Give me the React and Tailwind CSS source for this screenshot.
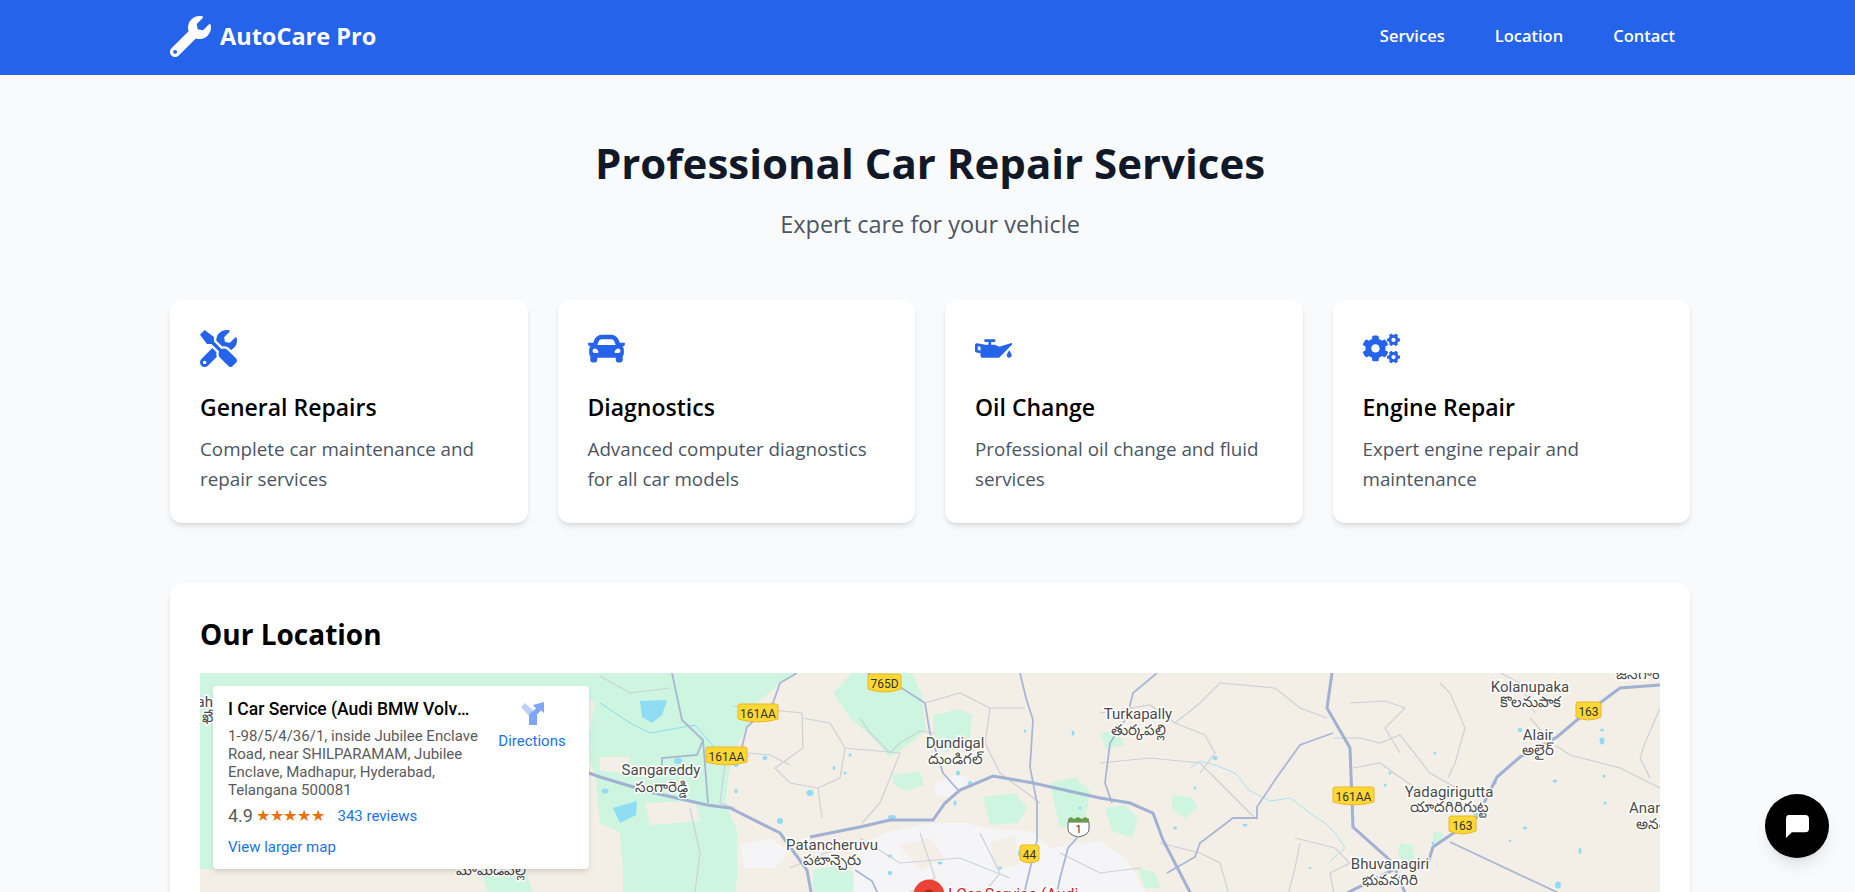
import React from 'react';
import { FaWrench, FaTools, FaCar, FaOilCan, FaCogs } from 'react-icons/fa';

const services = [
  { icon: FaTools, title: 'General Repairs', text: 'Complete car maintenance and repair services' },
  { icon: FaCar, title: 'Diagnostics', text: 'Advanced computer diagnostics for all car models' },
  { icon: FaOilCan, title: 'Oil Change', text: 'Professional oil change and fluid services' },
  { icon: FaCogs, title: 'Engine Repair', text: 'Expert engine repair and maintenance' },
];

// map data, coordinates are px inside the embed
const greens = [
  'M0 0H597L580 10 557 30 547 54 537 72 530 95 525 130 537 157 537 205 535 225H423L423 195 420 160 400 150 395 100 390 90 389 60 395 30 380 20H0Z',
  'M0 0H14V196H0Z',
  'M280 197H325L335 225H290Z',
  'M613 197 640 192 653 200 655 225H613Z',
  'M633 20 652 0H712L722 22 726 58 700 78 690 84 668 60 650 45Z',
  'M733 42 760 36 772 42 770 66 745 80 735 70Z',
  'M692 102 720 98 724 112 706 118 694 112Z',
  'M900 60 916 58 925 72 906 76Z',
  'M783 124 815 120 827 135 818 150 790 152Z',
  'M850 110 875 104 890 118 885 150 860 155Z',
  'M905 135 925 132 938 146 932 165 912 158Z',
  'M972 122 990 124 998 134 985 146 972 135Z',
  'M1265 152 1278 152 1278 158 1265 158Z',
  'M1200 170 1212 172 1215 188 1205 192 1198 180Z',
  'M1233 158 1243 160 1240 170 1233 168Z',
  'M938 195 955 200 960 215 945 215Z',
];

const urban = [
  'M653 225 655 175 690 158 733 150 765 150 785 155 830 158 850 175 900 168 925 185 950 225Z',
  'M540 172 570 165 590 178 575 195 545 195Z',
  'M735 110 760 100 770 108 750 125 735 122Z',
];

const beigeInUrban = 'M700 172 730 165 745 185 720 198Z M790 170 815 162 820 192 795 198Z';

const majorRoads = [
  'M389 100 400 104 450 119 507 132 530 135 580 160 607 197 613 230',
  'M610 164 660 154 690 147 733 147 745 130 760 117 793 103 833 110 900 125 930 130 953 140 963 167 993 225',
  'M1132 0 1127 35 1150 75 1153 154 1193 190 1207 225',
  'M1460 12 1420 15 1377 47 1357 64 1320 84 1297 104 1277 144 1233 174 1228 190 1193 197 1137 225',
];

const midRoads = [
  'M472 0 482 47 503 67 508 130',
  'M597 0 580 10 573 30 547 54 542 74',
  'M503 67 497 82 462 85 462 92',
  'M820 0 826 25 833 47 830 94 837 130 837 167 823 225',
  'M667 0 700 14 725 30 730 60 743 100 758 117',
  'M957 0 933 20 927 44 910 70 905 110 912 130',
  'M1133 60 1100 72 1077 104 1057 134 1057 145 1033 145 1000 170 995 184 967 200',
  'M1250 169 1363 222',
  'M877 165 868 175 860 205 856 225',
  'M655 197 672 208 680 225 700 225',
];

const minorRoads = [
  'M400 3 430 20 470 15',
  'M533 33 602 40 603 75 575 95 590 110 618 115 622 145',
  'M602 45 630 50 645 75 700 80 690 105 680 130 662 150',
  'M645 75 640 105 618 115',
  'M547 80 570 82 590 92',
  'M525 90 520 130 535 135',
  'M725 30 760 20 790 35 825 35',
  'M790 35 785 70 800 100 840 130',
  'M660 45 670 60 690 80 700 70 720 58 735 60',
  'M490 135 500 180 495 219',
  'M590 195 620 182 640 175',
  'M900 40 950 32 975 50 1000 30 1020 10',
  'M975 50 1005 62 1015 80 1000 100',
  'M900 90 950 85 1000 90 1040 130 1055 145',
  'M1020 10 1075 15 1100 35 1127 45',
  'M1150 30 1185 28 1205 35 1185 55 1200 80',
  'M1133 65 1160 65 1180 70 1200 62 1230 100 1265 120',
  'M1153 95 1180 90 1215 115 1225 125',
  'M1240 10 1250 20 1265 55 1255 90 1248 105',
  'M1100 170 1095 195 1087 225',
  'M1095 165 1135 175 1150 190 1130 200 1135 225',
  'M1340 62 1370 82 1420 95 1460 115',
  'M1330 45 1345 62',
  'M1460 35 1445 70 1440 85 1450 105',
  'M960 170 1000 180 1020 190 1030 225',
  'M1300 0 1320 10 1335 40',
  'M660 165 700 190 760 185 810 205',
  'M720 160 735 205 700 225',
  'M780 160 800 200 780 225',
  'M860 180 900 200 940 195',
];

const lakes = [
  'M440 28 467 27 462 42 452 50 442 44Z',
  'M413 135 437 128 436 142 420 150Z',
];

const waterBits = [
  [478, 88, 8, 6], [536, 92, 5, 4], [405, 118, 7, 5], [565, 85, 5, 4], [536, 118, 3, 5], [580, 148, 6, 6],
  [634, 95, 3, 4], [590, 168, 4, 5], [650, 82, 3, 3], [645, 100, 3, 3], [692, 144, 8, 4], [758, 100, 4, 5],
  [770, 110, 4, 4], [690, 183, 5, 3], [740, 190, 5, 3], [755, 130, 3, 5], [1015, 85, 5, 4], [975, 155, 4, 3],
  [995, 115, 3, 3], [1045, 152, 5, 3], [1110, 195, 3, 2], [1190, 100, 3, 3], [1235, 80, 3, 3], [1233, 170, 3, 3],
  [1295, 110, 4, 3], [1320, 57, 5, 4], [1402, 68, 5, 7], [1402, 57, 4, 3], [1404, 103, 3, 3], [1355, 108, 5, 3],
  [1405, 130, 3, 3], [1325, 155, 4, 3], [1358, 212, 6, 7], [1380, 178, 3, 6], [1185, 112, 3, 3], [1275, 140, 4, 5],
  [1310, 168, 3, 2], [873, 60, 3, 5], [825, 58, 3, 3], [880, 135, 3, 3], [822, 180, 8, 8], [800, 195, 4, 3],
  [690, 200, 5, 4], [610, 120, 7, 6],
];

const shields = [
  { x: 668, y: 1, w: 33, h: 19, t: '765D' },
  { x: 538, y: 31, w: 40, h: 19, t: '161AA' },
  { x: 506, y: 74, w: 41, h: 19, t: '161AA' },
  { x: 820, y: 172, w: 19, h: 19, t: '44' },
  { x: 1133, y: 114, w: 41, h: 19, t: '161AA' },
  { x: 1249, y: 143, w: 27, h: 19, t: '163' },
  { x: 1376, y: 29, w: 25, h: 19, t: '163' },
];

const labels = [
  { x: 461, y: 102, t: 'Sangareddy' }, { x: 461, y: 119, t: 'సంగారెడ్డి' },
  { x: 755, y: 75, t: 'Dundigal' }, { x: 755, y: 91, t: 'దుండిగల్' },
  { x: 632, y: 177, t: 'Patancheruvu' }, { x: 632, y: 192, t: 'పటాన్చెరు' },
  { x: 938, y: 46, t: 'Turkapally' }, { x: 938, y: 62, t: 'తుర్కపల్లి' },
  { x: 1330, y: 19, t: 'Kolanupaka' }, { x: 1330, y: 34, t: 'కొలనుపాక' },
  { x: 1338, y: 67, t: 'Alair' }, { x: 1338, y: 82, t: 'అలైర్' },
  { x: 1249, y: 124, t: 'Yadagirigutta' }, { x: 1249, y: 139, t: 'యాదగిరిగుట్ట' },
  { x: 1190, y: 196, t: 'Bhuvanagiri' }, { x: 1190, y: 212, t: 'భువనగిరి' },
  { x: 1429, y: 140, t: 'Anantaram', start: true }, { x: 1436, y: 156, t: 'అనంతారం', start: true },
  { x: 1438, y: 6, t: 'జనగాం' },
  { x: 291, y: 202, t: 'మామిడిపల్లి' },
  { x: 13, y: 34, t: 'ah', end: true }, { x: 13, y: 49, t: 'ఖే', end: true },
];

function MapDrawing() {
  return (
    <svg viewBox="0 0 1460 450" className="block w-full h-[450px]">
      <rect width="1460" height="450" fill="#f4efe6" />
      {greens.map((d, i) => <path key={i} d={d} fill="#cdf5e0" />)}
      <path d="M445 130 495 128 500 148 450 152Z M400 84 430 84 425 100 400 98Z" fill="#f4efe6" />
      {urban.map((d, i) => <path key={i} d={d} fill="#f5f5f7" />)}
      <path d={beigeInUrban} fill="#f4efe6" />
      {lakes.map((d, i) => <path key={i} d={d} fill="#8fdcf5" />)}
      {waterBits.map(([x, y, w, h], i) => <ellipse key={i} cx={x} cy={y} rx={w / 2} ry={h / 2} fill="#8fdcf5" />)}
      {minorRoads.map((d, i) => <path key={i} d={d} fill="none" stroke="#ccd0d8" strokeWidth="1.2" />)}
      <path d="M990 95 1000 88 1015 92 1035 100 1050 118 1070 128 1090 125 1110 140 1125 150 1135 160 1145 175 1130 188" fill="none" stroke="#a5e4f2" strokeWidth="1" />
      <path d="M400 30 430 50 450 60 495 52 515 75" fill="none" stroke="#8ddcf2" strokeWidth="1" />
      {midRoads.map((d, i) => <path key={i} d={d} fill="none" stroke="#a9b7d5" strokeWidth="1.8" />)}
      {majorRoads.map((d, i) => <path key={i} d={d} fill="none" stroke="#a0b1d4" strokeWidth="3" />)}
      {shields.map((s, i) => (
        <g key={i}>
          <path
            d={`M${s.x + 2} ${s.y}H${s.x + s.w - 2}Q${s.x + s.w} ${s.y} ${s.x + s.w} ${s.y + 2}V${s.y + s.h - 4}Q${s.x + s.w / 2} ${s.y + s.h + 2} ${s.x} ${s.y + s.h - 4}V${s.y + 2}Q${s.x} ${s.y} ${s.x + 2} ${s.y}Z`}
            fill="#fdd835"
            stroke="#f0b429"
          />
          <text x={s.x + s.w / 2} y={s.y + 14} textAnchor="middle" fontSize="12" fill="#333" fontFamily="Roboto, sans-serif">{s.t}</text>
        </g>
      ))}
      <path d="M868 149H889V156Q889 162 878.5 164 868 162 868 156Z" fill="#fff" stroke="#5f6368" />
      <path d="M868 149V146L871 144 874 146 878 144 882 146 885 144 889 146V149Z" fill="#6a9a4a" />
      <text x="878.5" y="160" textAnchor="middle" fontSize="11" fill="#333" fontFamily="Roboto, sans-serif">1</text>
      {labels.map((l, i) => (
        <text
          key={i}
          x={l.x}
          y={l.y}
          textAnchor={l.start ? 'start' : l.end ? 'end' : 'middle'}
          fontSize="15"
          fill="#4a4a4a"
          stroke="#ffffff"
          strokeWidth="3"
          paintOrder="stroke"
          fontFamily="Roboto, 'Noto Sans', sans-serif"
        >
          {l.t}
        </text>
      ))}
      <circle cx="729" cy="222" r="15.5" fill="#ea4335" />
      <circle cx="729" cy="222" r="5.5" fill="#a52714" />
      <text x="748" y="227" fontSize="16" fill="#c5221f" stroke="#ffffff" strokeWidth="2.5" paintOrder="stroke" fontFamily="Roboto, sans-serif">I Car Service (Audi</text>
    </svg>
  );
}

function DirectionsIcon() {
  return (
    <svg viewBox="0 0 23 23" className="w-[23px] h-[23px]">
      <path d="M0 5 4 1 16 12V23H8V14Z" fill="#bcd0fb" />
      <path d="M8 23V12.5L15 6.5 12 3 23 0V11L20 8.5 16 12.5V23Z" fill="#7ea6f8" />
    </svg>
  );
}

export default function App() {
  return (
    <div className="h-screen overflow-hidden bg-[#f9fafb] font-['Open_Sans',sans-serif]">
      {/* Header */}
      <nav className="h-[75px] bg-[#2563eb] text-white">
        <div className="ml-[170px] mr-[165px] h-full flex items-center justify-between pr-[15px] pb-[2px]">
          <div className="flex items-center gap-[9px]">
            <FaWrench size={41} />
            <span className="text-[23.5px] font-bold">AutoCare Pro</span>
          </div>
          <div className="flex items-center gap-[50px] text-[16.5px] font-semibold">
            <a>Services</a>
            <a>Location</a>
            <a>Contact</a>
          </div>
        </div>
      </nav>

      <div className="ml-[170px] mr-[165px]">
        {/* Hero */}
        <div className="pt-[58px] text-center">
          <h1 className="text-[42px] leading-[60px] font-bold text-[#111827]">Professional Car Repair Services</h1>
          <p className="mt-[15px] text-[23.5px] leading-[32px] text-[#4b5563]">Expert care for your vehicle</p>
        </div>

        {/* Services */}
        <div className="mt-[60px] grid grid-cols-4 gap-[30px]">
          {services.map((s) => {
            const Icon = s.icon;
            return (
              <div key={s.title} className="h-[223px] bg-white rounded-xl shadow-md p-[30px]">
                <div className="h-[37px] flex items-center">
                  <Icon size={37} className="text-[#2563eb]" />
                </div>
                <h3 className="mt-[22px] text-[23px] leading-9 font-semibold text-black">{s.title}</h3>
                <p className="mt-[9px] text-[18.8px] leading-[30px] text-[#4b5563]">{s.text}</p>
              </div>
            );
          })}
        </div>

        {/* Location */}
        <div className="mt-[60px] bg-white rounded-xl shadow-md p-[30px]">
          <h2 className="text-[28px] leading-[42px] font-bold text-black">Our Location</h2>
          <div className="relative mt-[18px] overflow-hidden">
            <MapDrawing />
            <div className="absolute left-[13px] top-[13px] w-[376px] h-[183px] bg-white rounded-sm shadow-md pl-[15px] pr-[22px] pt-[13px] font-['Roboto',sans-serif] flex justify-between">
              <div className="w-[258px]">
                <div className="w-[245px] text-[17.5px] leading-5 font-medium text-black truncate">I Car Service (Audi BMW Volvo Mercedes)</div>
                <div className="mt-[8px] text-[15px] leading-[18px] text-[#5b5b5b]">
                  1-98/5/4/36/1, inside Jubilee Enclave Road, near SHILPARAMAM, Jubilee Enclave, Madhapur, Hyderabad, Telangana 500081
                </div>
                <div className="mt-[5px] flex items-center h-[24px]">
                  <span className="text-lg text-[#5b5b5b]">4.9</span>
                  <span className="ml-[3px] text-base tracking-[-0.3px] text-[#e8710a]">★★★★★</span>
                  <span className="ml-[13px] text-[15px] text-[#1a73e8]">343 reviews</span>
                </div>
                <div className="mt-[9px] text-[15px] leading-5 text-[#1a73e8]">View larger map</div>
              </div>
              <div className="w-[70px] flex flex-col items-center pt-[3px]">
                <DirectionsIcon />
                <div className="mt-[6px] text-[15px] leading-5 text-[#1a73e8]">Directions</div>
              </div>
            </div>
          </div>
        </div>
      </div>

      {/* Chat bubble */}
      <div className="fixed right-[26px] bottom-[34px] w-16 h-16 rounded-full bg-black shadow-lg flex items-center justify-center">
        <svg viewBox="0 0 26 24" className="w-[25px] h-[23px]">
          <path d="M4 0H21Q25 0 25 4V14Q25 18 21 18H7L1 24V4Q1 0 4 0Z" fill="#fff" />
        </svg>
      </div>
    </div>
  );
}
